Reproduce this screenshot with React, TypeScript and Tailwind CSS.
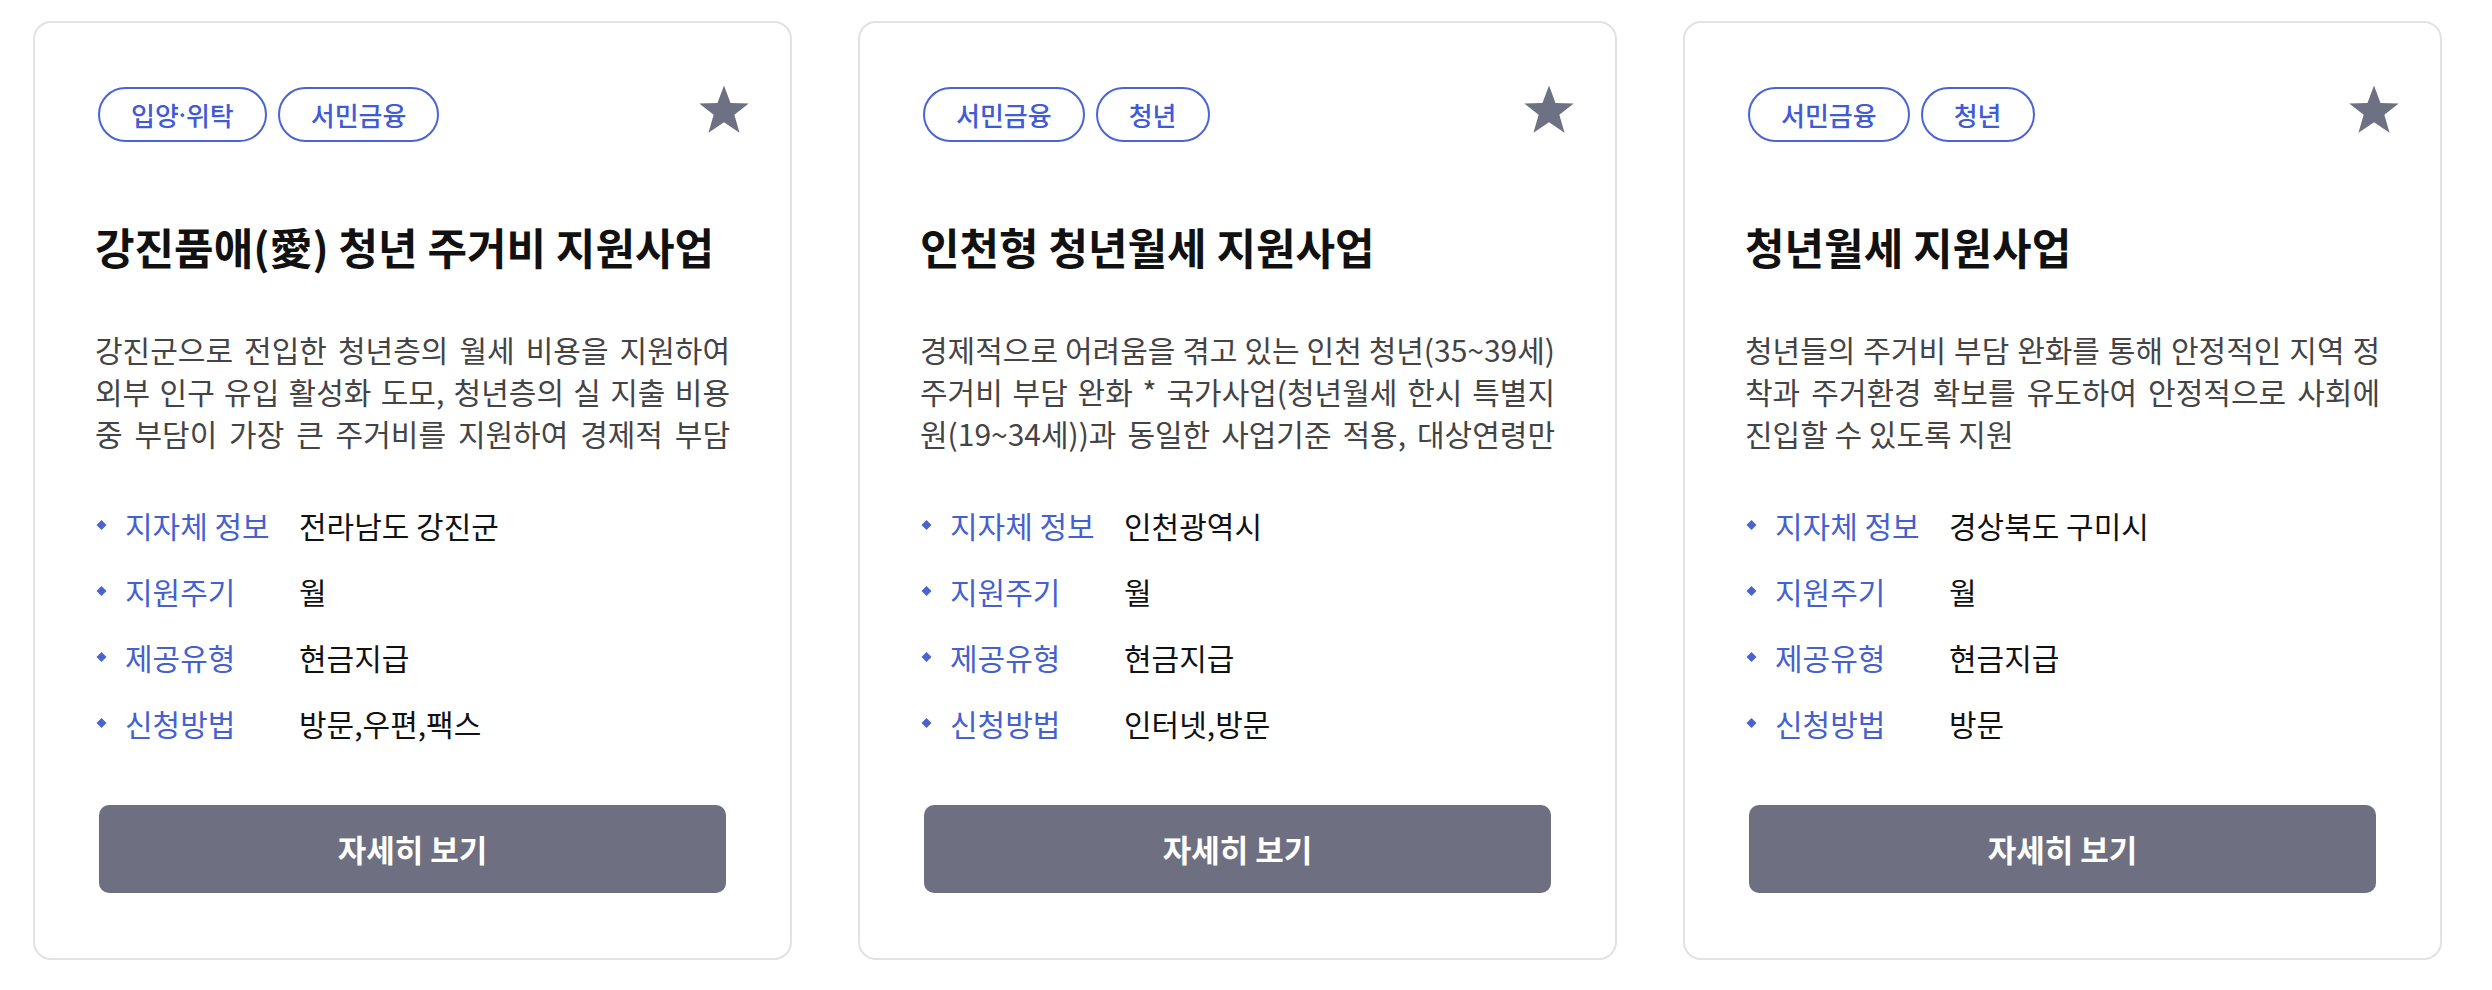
import React from "react";

type Policy = {
  tags: string[];
  title: string;
  desc: string;
  justifyLast?: boolean;
  region: string;
  cycle: string;
  kind: string;
  apply: string;
};

const policies: Policy[] = [
  {
    tags: ["입양·위탁", "서민금융"],
    title: "강진품애(愛) 청년 주거비 지원사업",
    desc: "강진군으로 전입한 청년층의 월세 비용을 지원하여 외부 인구 유입 활성화 도모, 청년층의 실 지출 비용 중 부담이 가장 큰 주거비를 지원하여 경제적 부담",
    justifyLast: true,
    region: "전라남도 강진군",
    cycle: "월",
    kind: "현금지급",
    apply: "방문,우편,팩스",
  },
  {
    tags: ["서민금융", "청년"],
    title: "인천형 청년월세 지원사업",
    desc: "경제적으로 어려움을 겪고 있는 인천 청년(35~39세) 주거비 부담 완화 * 국가사업(청년월세 한시 특별지원(19~34세))과 동일한 사업기준 적용, 대상연령만 35~39세로 확대",
    region: "인천광역시",
    cycle: "월",
    kind: "현금지급",
    apply: "인터넷,방문",
  },
  {
    tags: ["서민금융", "청년"],
    title: "청년월세 지원사업",
    desc: "청년들의 주거비 부담 완화를 통해 안정적인 지역 정착과 주거환경 확보를 유도하여 안정적으로 사회에 진입할 수 있도록 지원",
    region: "경상북도 구미시",
    cycle: "월",
    kind: "현금지급",
    apply: "방문",
  },
];

const Star = () => (
  <svg viewBox="0 0 24 24" className="absolute right-[39px] top-[59px] h-[54px] w-[54px]">
    <polygon
      points="12,1.6 14.9,9.3 23,9.6 16.6,14.6 18.9,22.5 12,17.9 5.1,22.5 7.4,14.6 1,9.6 9.1,9.3"
      fill="#6e7083"
    />
  </svg>
);

const Diamond = () => (
  <svg viewBox="0 0 13 12" className="h-[12px] w-[13px] shrink-0">
    <polygon points="6.5,1 11.5,6 6.5,11 1.5,6" fill="#4b63d0" />
  </svg>
);

// the middle dot is set in a latin face so it stays narrow
const TagText = ({ text }: { text: string }) => {
  const parts = text.split("·");
  if (parts.length < 2) return <>{text}</>;
  return (
    <>
      {parts[0]}
      <span className="font-['Noto_Sans',sans-serif]">·</span>
      {parts[1]}
    </>
  );
};

const Row = ({ label, value }: { label: string; value: string }) => (
  <div className="flex h-[42px] items-center text-[30px] leading-[42px]">
    <Diamond />
    <span className="ml-[17px] w-[174px] shrink-0 text-[#4560d0]">{label}</span>
    <span className="text-[#111]">{value}</span>
  </div>
);

const Card = ({ p }: { p: Policy }) => (
  <div className="relative flex w-[759px] shrink-0 flex-col rounded-[18px] border-2 border-[#e2e2e2] bg-white px-[60px] pb-[65px] pt-[64px]">
    <Star />
    <div className="ml-[3px] flex gap-[11px]">
      {p.tags.map(tag => (
        <span
          key={tag}
          className="flex h-[55px] items-center rounded-full border-2 border-[#4a63d6] px-[31px] text-[26px] font-medium text-[#3f5bd6]"
        >
          <TagText text={tag} />
        </span>
      ))}
    </div>
    <h2 className="mt-[76px] whitespace-nowrap text-[43px] font-bold leading-[56px] text-[#111]">
      {p.title}
    </h2>
    <p
      className={`mt-[54px] h-[126px] overflow-hidden text-justify text-[30px] leading-[42px] text-[#444] ${
        p.justifyLast ? "[text-align-last:justify]" : ""
      }`}
    >
      {p.desc}
    </p>
    <div className="mt-[50px] flex flex-col gap-[24px]">
      <Row label="지자체 정보" value={p.region} />
      <Row label="지원주기" value={p.cycle} />
      <Row label="제공유형" value={p.kind} />
      <Row label="신청방법" value={p.apply} />
    </div>
    <button className="mx-[4px] mt-[61px] flex h-[88px] items-center justify-center rounded-[10px] bg-[#6e6f80] text-[31px] font-bold text-white">
      자세히 보기
    </button>
  </div>
);

export default function App() {
  return (
    <div className="flex min-h-screen items-start gap-[66px] bg-white pl-[33px] pt-[21px] font-['Noto_Sans_CJK_KR','Noto_Sans',sans-serif]">
      {policies.map(p => (
        <Card key={p.title} p={p} />
      ))}
    </div>
  );
}
